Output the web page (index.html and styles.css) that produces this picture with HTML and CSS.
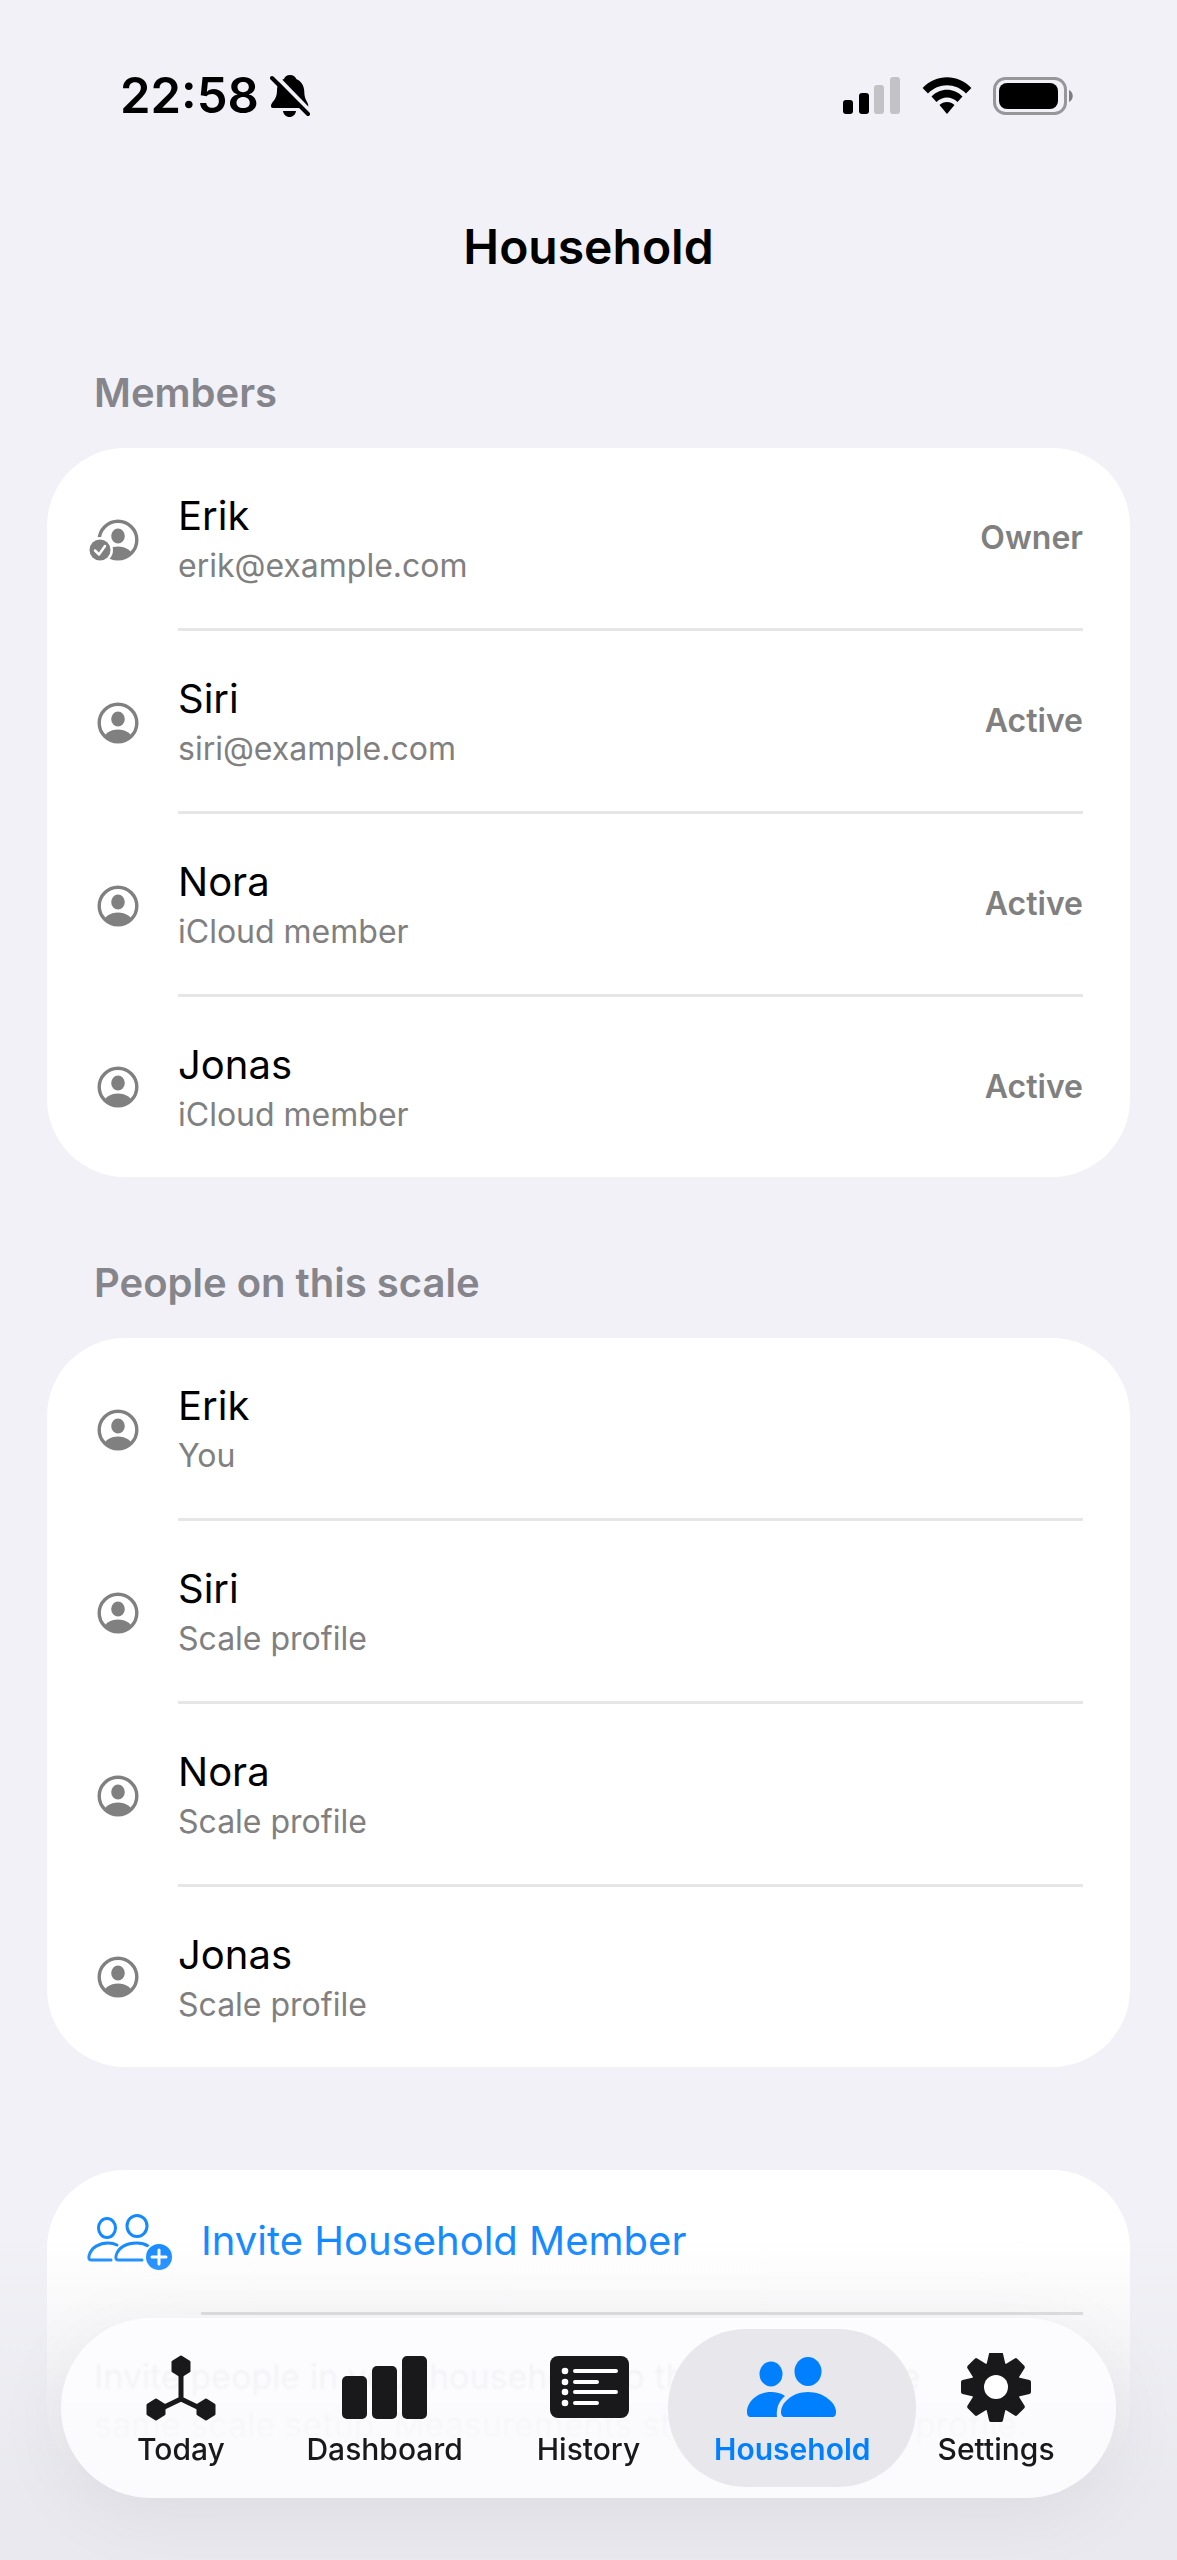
FILE: index.html
```html
<!DOCTYPE html>
<html lang="en">
<head>
    <meta charset="UTF-8">
    <meta name="viewport" content="width=device-width, initial-scale=1.0">
    <title>Household</title>
    <link rel="stylesheet" href="styles.css">
</head>
<body>
    <!-- shared icon shapes -->
    <svg class="sprite" aria-hidden="true">
        <clipPath id="person-clip"><circle cx="24" cy="24" r="19"/></clipPath>
        <symbol id="person-circle" viewBox="0 0 48 48">
            <circle cx="24" cy="24" r="18.800" fill="none" stroke="currentColor" stroke-width="3.400"/>
            <ellipse cx="24" cy="20" rx="6.800" ry="7.500" fill="currentColor"/>
            <ellipse cx="24" cy="41" rx="14.500" ry="10.500" fill="currentColor" clip-path="url(#person-clip)"/>
        </symbol>
    </svg>

    <header class="status-bar">
        <div class="status-left">
            <span class="clock">22:58</span>
            <svg class="bell" viewBox="0 0 40 44" aria-hidden="true">
                <path d="M20 1c3.500 0 5.500 2 6.300 4 5 2 8 7 8 13 0 8 4 10 4 14 0 1.500-1 2-2 2H3c-1.500 0-2-1-2-2 0-4 6-6 6-15 0-6 2-10 7-12 .800-2 2.500-4 6-4z"/>
                <path d="M13 37h13c-.500 3.500-3 6-6.500 6S13.500 40.500 13 37z"/>
                <path class="slash-gap" d="M4 0l36 37"/>
                <path class="slash" d="M2 4l36 36"/>
            </svg>
        </div>
        <div class="status-right">
            <svg class="signal" viewBox="0 0 58 38" aria-hidden="true">
                <rect x="0" y="23" width="10" height="14" rx="3"/>
                <rect x="16" y="16" width="10" height="21" rx="3"/>
                <rect class="weak" x="31" y="8" width="10" height="29" rx="3"/>
                <rect class="weak" x="47" y="0" width="10" height="37" rx="3"/>
            </svg>
            <svg class="wifi" viewBox="0 0 50 38" aria-hidden="true">
                <path d="M.600 11C14-3.500 36-3.500 49.400 11L44 16.500C33.500 5.500 16.500 5.500 6 16.500z"/>
                <path d="M9.500 19.500C18 10.500 32 10.500 40.500 19.500L35.500 25C29.500 19 20.500 19 14.500 25z"/>
                <path d="M17.500 28C21.500 24 28.500 24 32.500 28L25 37z"/>
            </svg>
            <svg class="battery" viewBox="0 0 82 38" aria-hidden="true">
                <rect x="1.500" y="1.500" width="71" height="35" rx="11" fill="none" stroke="#96969b" stroke-width="3"/>
                <rect x="6" y="6" width="59" height="26" rx="8"/>
                <path d="M76 13c5 2 5 10 0 12z" fill="#7d7d82"/>
            </svg>
        </div>
    </header>

    <main class="content">
        <h1>Household</h1>

        <section>
            <h2>Members</h2>
            <ul class="card">
                <li class="row">
                    <svg class="avatar-owner" viewBox="0 0 54 48" aria-hidden="true">
                        <use href="#person-circle" x="6" y="0" width="48" height="48"/>
                        <circle cx="12" cy="34" r="13" fill="#fff"/>
                        <circle cx="12" cy="34" r="10.500" fill="currentColor"/>
                        <path d="M7 34.500l4 4 6-8.500" fill="none" stroke="#fff" stroke-width="2.500" stroke-linecap="round" stroke-linejoin="round"/>
                    </svg>
                    <div class="row-body">
                        <div class="who"><span class="name">Erik</span><span class="detail">erik@example.com</span></div>
                        <span class="status">Owner</span>
                    </div>
                </li>
                <li class="row">
                    <svg class="avatar" aria-hidden="true"><use href="#person-circle"/></svg>
                    <div class="row-body">
                        <div class="who"><span class="name">Siri</span><span class="detail">siri@example.com</span></div>
                        <span class="status">Active</span>
                    </div>
                </li>
                <li class="row">
                    <svg class="avatar" aria-hidden="true"><use href="#person-circle"/></svg>
                    <div class="row-body">
                        <div class="who"><span class="name">Nora</span><span class="detail">iCloud member</span></div>
                        <span class="status">Active</span>
                    </div>
                </li>
                <li class="row">
                    <svg class="avatar" aria-hidden="true"><use href="#person-circle"/></svg>
                    <div class="row-body">
                        <div class="who"><span class="name">Jonas</span><span class="detail">iCloud member</span></div>
                        <span class="status">Active</span>
                    </div>
                </li>
            </ul>
        </section>

        <section>
            <h2>People on this scale</h2>
            <ul class="card">
                <li class="row">
                    <svg class="avatar" aria-hidden="true"><use href="#person-circle"/></svg>
                    <div class="row-body">
                        <div class="who"><span class="name">Erik</span><span class="detail">You</span></div>
                    </div>
                </li>
                <li class="row">
                    <svg class="avatar" aria-hidden="true"><use href="#person-circle"/></svg>
                    <div class="row-body">
                        <div class="who"><span class="name">Siri</span><span class="detail">Scale profile</span></div>
                    </div>
                </li>
                <li class="row">
                    <svg class="avatar" aria-hidden="true"><use href="#person-circle"/></svg>
                    <div class="row-body">
                        <div class="who"><span class="name">Nora</span><span class="detail">Scale profile</span></div>
                    </div>
                </li>
                <li class="row">
                    <svg class="avatar" aria-hidden="true"><use href="#person-circle"/></svg>
                    <div class="row-body">
                        <div class="who"><span class="name">Jonas</span><span class="detail">Scale profile</span></div>
                    </div>
                </li>
            </ul>
        </section>

        <section class="invite-section">
            <div class="card">
                <button class="invite" type="button">
                    <svg class="invite-icon" viewBox="0 0 86 58" aria-hidden="true">
                        <g fill="none" stroke="currentColor" stroke-width="3" stroke-linecap="round" stroke-linejoin="round">
                            <ellipse cx="20" cy="14" rx="8.500" ry="9.500"/>
                            <ellipse cx="50" cy="12" rx="10" ry="10.500"/>
                            <path d="M24 46H5c-3 0-3.500-1-3-4 2-9 11-13 19-13 4 0 7 1 9 2"/>
                            <path d="M55 46H32c-3 0-3.500-1-3-4 2-9 11-13 21-13 5 0 8 1 11 3"/>
                        </g>
                        <circle cx="72" cy="43" r="15" fill="#fdfdfd"/>
                        <circle cx="72" cy="43" r="13" fill="currentColor"/>
                        <path d="M72 36v14M65 43h14" stroke="#fff" stroke-width="3" stroke-linecap="round"/>
                    </svg>
                    <span class="invite-label">Invite Household Member</span>
                </button>
                <p class="note">Invite people in your household so they can use the<br>same scale setup. Measurements stay in your own profile.</p>
            </div>
        </section>
    </main>

    <div class="scroll-edge"></div>

    <nav class="tab-bar">
        <a class="tab" href="#today">
            <svg viewBox="0 0 90 72" aria-hidden="true">
                <path d="M45 14v32M45 46L20 58M45 46l25 12" fill="none" stroke="currentColor" stroke-width="5"/>
                <g fill="currentColor" stroke="currentColor" stroke-width="3" stroke-linejoin="round">
                    <path d="M45 4l8 5v9l-8 5-8-5V9z"/>
                    <path d="M20 47l8 5v9l-8 5-8-5v-9z"/>
                    <path d="M70 47l8 5v9l-8 5-8-5v-9z"/>
                </g>
            </svg>
            <span>Today</span>
        </a>
        <a class="tab" href="#dashboard">
            <svg viewBox="0 0 90 72" aria-hidden="true" fill="currentColor">
                <rect x="2" y="23" width="25" height="43" rx="5"/>
                <rect x="32" y="13" width="25" height="53" rx="5"/>
                <rect x="62" y="3" width="25" height="63" rx="5"/>
            </svg>
            <span>Dashboard</span>
        </a>
        <a class="tab" href="#history">
            <svg viewBox="0 0 90 72" aria-hidden="true">
                <rect x="7" y="3" width="79" height="62" rx="8" fill="currentColor"/>
                <g stroke="#fff" stroke-width="4" stroke-linecap="round">
                    <path d="M32 18h41M32 29h22M32 39h41M32 50h22"/>
                </g>
                <g fill="#fff">
                    <circle cx="22" cy="18" r="3.300"/>
                    <circle cx="22" cy="29" r="3.300"/>
                    <circle cx="22" cy="39" r="3.300"/>
                    <circle cx="22" cy="50" r="3.300"/>
                </g>
            </svg>
            <span>History</span>
        </a>
        <a class="tab tab-active" href="#household" aria-current="page">
            <svg viewBox="0 0 90 72" aria-hidden="true" fill="currentColor">
                <ellipse cx="24" cy="21" rx="11.500" ry="12.500"/>
                <ellipse cx="61" cy="18.500" rx="13.500" ry="14.500"/>
                <path d="M30 64H4c-3 0-4-2-4-5 0-10 10-20 24-20 5 0 10 1 14 4-6 5-9 12-8 21z"/>
                <path d="M38 64c-3 0-4-2-4-5 0-9 11-20 27-20s28 11 28 20c0 3-1 5-4 5z"/>
            </svg>
            <span>Household</span>
        </a>
        <a class="tab" href="#settings">
            <svg viewBox="0 0 90 72" aria-hidden="true">
                <g fill="currentColor" stroke="currentColor" stroke-width="4" stroke-linejoin="round">
                    <circle cx="45" cy="34" r="23"/>
                    <path d="M37 14l3-13h10l3 13z"/>
                    <path d="M37 14l3-13h10l3 13z" transform="rotate(45 45 34)"/>
                    <path d="M37 14l3-13h10l3 13z" transform="rotate(90 45 34)"/>
                    <path d="M37 14l3-13h10l3 13z" transform="rotate(135 45 34)"/>
                    <path d="M37 14l3-13h10l3 13z" transform="rotate(180 45 34)"/>
                    <path d="M37 14l3-13h10l3 13z" transform="rotate(225 45 34)"/>
                    <path d="M37 14l3-13h10l3 13z" transform="rotate(270 45 34)"/>
                    <path d="M37 14l3-13h10l3 13z" transform="rotate(315 45 34)"/>
                </g>
                <circle cx="45" cy="34" r="12" fill="#fff"/>
            </svg>
            <span>Settings</span>
        </a>
    </nav>
</body>
</html>
```

FILE: styles.css
```css
* {
    box-sizing: border-box;
}
body {
    margin: 0;
    background-color: #f1f1f7;
    color: #000;
    font-family: Inter, "Liberation Sans", sans-serif;
    font-size: 40px;
    line-height: 50px;
}
.sprite {
    position: absolute;
    width: 0;
    height: 0;
}

/* status bar */
.status-bar {
    display: flex;
    justify-content: space-between;
    align-items: center;
    height: 192px;
    padding: 0 102px 0 120px;
}
.status-left,
.status-right {
    display: flex;
    align-items: center;
}
.status-left {
    gap: 11px;
}
.status-right {
    gap: 21px;
}
.clock {
    font-size: 49px;
    font-weight: 600;
}
.bell {
    width: 40px;
    height: 44px;
}
.slash {
    stroke: #000;
    stroke-width: 4;
    stroke-linecap: round;
}
.slash-gap {
    stroke: #f1f1f7;
    stroke-width: 4;
}
.signal {
    width: 58px;
    height: 38px;
}
.weak {
    fill: #c2c2c7;
}
.wifi {
    width: 50px;
    height: 38px;
}
.battery {
    width: 82px;
    height: 38px;
}

/* list */
.content {
    height: calc(100vh - 192px);
    padding: 25px 47px 0;
    overflow: hidden;
}
h1 {
    margin: 0 0 89px;
    font-size: 48px;
    font-weight: 600;
    line-height: 60px;
    text-align: center;
}
section {
    margin-bottom: 79px;
}
h2 {
    margin: 0 0 28px;
    padding-left: 47px;
    color: #85858b;
    font-size: 40px;
    font-weight: 600;
    line-height: 54px;
}
.card {
    margin: 0;
    padding: 0;
    border-radius: 78px;
    background-color: #fff;
    list-style: none;
}
.row {
    display: flex;
    align-items: center;
    padding: 0 47px;
}
.avatar,
.avatar-owner {
    flex: none;
    height: 48px;
    color: #808080;
}
.avatar {
    width: 48px;
    margin-right: 36px;
}
.avatar-owner {
    width: 54px;
    margin-left: -6px;
    margin-right: 36px;
}
.row-body {
    display: flex;
    flex: 1;
    justify-content: space-between;
    align-items: center;
    height: 183px;
    border-bottom: 3px solid #e6e6e6;
}
.row:last-child .row-body {
    height: 180px;
    border-bottom: 0;
}
.who {
    display: flex;
    flex-direction: column;
    padding-top: 6px;
}
.detail {
    color: #808080;
    font-size: 32px;
}
.status {
    color: #808080;
    font-size: 32px;
    font-weight: 600;
}

/* invite */
.invite-section {
    margin-top: 103px;
}
.invite {
    display: flex;
    align-items: center;
    width: 100%;
    padding: 0 47px 0 40px;
    border: 0;
    background: none;
    color: #148aff;
    font: inherit;
    text-align: left;
}
.invite-icon {
    flex: none;
    width: 86px;
    height: 58px;
    margin-right: 28px;
}
.invite-label {
    flex: 1;
    padding: 46px 0;
    border-bottom: 3px solid #d8d8d8;
}
.note {
    margin: 0;
    padding: 38px 47px;
    color: #606066;
    font-size: 34px;
    line-height: 48px;
}

/* content fades out towards the bottom edge */
.scroll-edge {
    position: fixed;
    right: 0;
    bottom: 0;
    left: 0;
    height: 320px;
    background: linear-gradient(rgba(233, 233, 239, 0), rgba(233, 233, 239, 0.6) 45%, #e9e9ef 75%);
    pointer-events: none;
}

/* tab bar */
.tab-bar {
    position: fixed;
    right: 61px;
    bottom: 62px;
    left: 61px;
    display: grid;
    grid-template-columns: repeat(5, 1fr);
    height: 180px;
    padding: 11px 18px;
    border-radius: 90px;
    background-color: rgba(253, 253, 255, 0.88);
    box-shadow: 0 16px 80px rgba(0, 0, 0, 0.06);
    backdrop-filter: blur(1px);
}
.tab {
    display: flex;
    flex-direction: column;
    align-items: center;
    padding-top: 24px;
    border-radius: 78px;
    color: #19191b;
    font-size: 30px;
    font-weight: 500;
    line-height: 36px;
    text-decoration: none;
}
.tab svg {
    width: 90px;
    height: 72px;
    margin-bottom: 6px;
}
.tab-active {
    margin: 0 -22px;
    background-color: #e8e8ec;
    color: #0080ff;
    font-weight: 600;
}
```
